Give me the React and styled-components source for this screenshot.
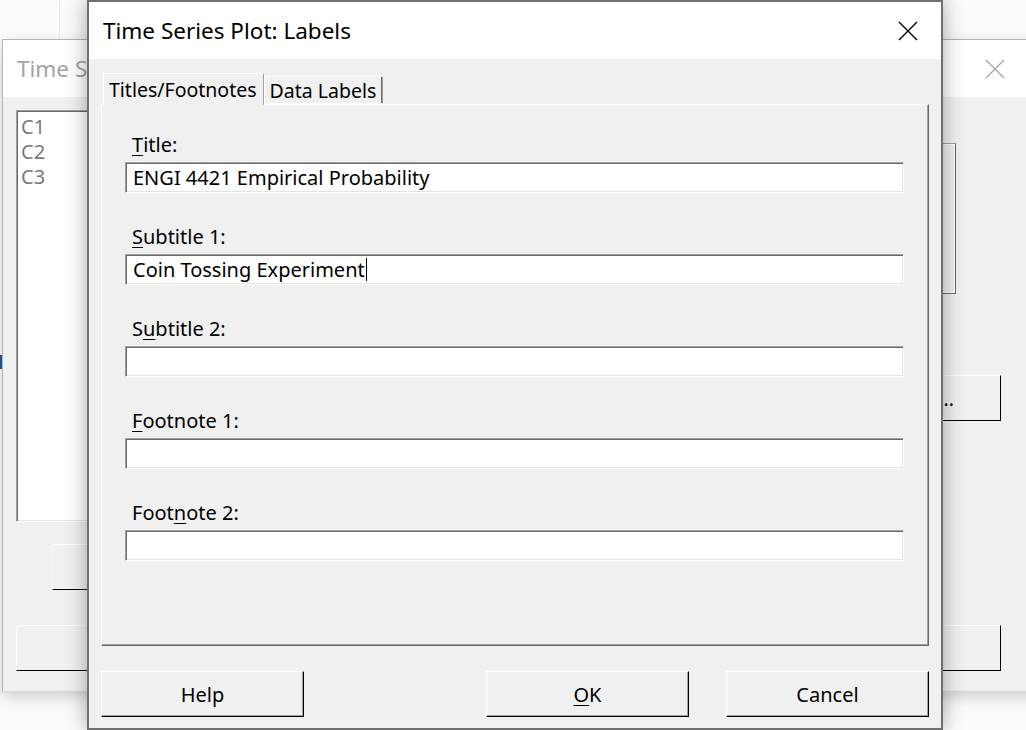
import React from 'react'
import styled, { createGlobalStyle } from 'styled-components'

const GlobalStyle = createGlobalStyle`
  html, body {
    margin: 0;
    padding: 0;
  }
  body {
    width: 1026px;
    height: 730px;
    overflow: hidden;
    background: #fbfbfb;
    font-family: "Noto Sans", "Segoe UI", sans-serif;
  }
`

const fields = [
  { before: '', key: 'T', after: 'itle:', value: 'ENGI 4421 Empirical Probability' },
  { before: '', key: 'S', after: 'ubtitle 1:', value: 'Coin Tossing Experiment', caret: true },
  { before: 'S', key: 'u', after: 'btitle 2:', value: '' },
  { before: '', key: 'F', after: 'ootnote 1:', value: '' },
  { before: 'Foot', key: 'n', after: 'ote 2:', value: '' }
]

const CloseIcon = ({ color }) =>
  <svg width="20" height="20" viewBox="0 0 20 20">
    <path d="M1 1 L19 19 M19 1 L1 19" stroke={color} strokeWidth="1.4" fill="none" />
  </svg>

const App = () =>
  <Desktop>
    <GlobalStyle />
    <EdgeMark />
    <BackWindow>
      <BackTitleBar>
        <span>Time Se</span>
        <CloseIcon color="#a8a8a8" />
      </BackTitleBar>
      <BackBody>
        <BackTopRow>
          <BackLeft>
            <ListBox>
              <ListItem>C1</ListItem>
              <ListItem>C2</ListItem>
              <ListItem>C3</ListItem>
            </ListBox>
            <BackButton indent />
          </BackLeft>
          <BackRight>
            <SunkenBox />
            <BackButton>Data View...</BackButton>
          </BackRight>
        </BackTopRow>
        <BackBottomRow>
          <BackButton />
          <BackButton />
        </BackBottomRow>
      </BackBody>
    </BackWindow>

    <Dialog>
      <TitleBar>
        <Title>Time Series Plot: Labels</Title>
        <CloseIcon color="#000" />
      </TitleBar>
      <Body>
        <TabStrip>
          <Tab selected>Titles/Footnotes</Tab>
          <Tab>Data Labels</Tab>
        </TabStrip>
        <Pane>
          {fields.map((f, i) =>
            <Field key={i}>
              <Label>{f.before}<Key>{f.key}</Key>{f.after}</Label>
              <TextBox>
                {f.value}
                {f.caret && <Caret />}
              </TextBox>
            </Field>
          )}
        </Pane>
        <ButtonRow>
          <Button>Help</Button>
          <Spacer />
          <Button><Key>O</Key>K</Button>
          <Button>Cancel</Button>
        </ButtonRow>
      </Body>
    </Dialog>
  </Desktop>

export default App

const Desktop = styled.div`
  position: relative;
  width: 1026px;
  height: 730px;
  overflow: hidden;
  background:
    linear-gradient(to right, transparent 59px, #ececec 59px, #ececec 60px, transparent 60px) top / 100% 39px no-repeat,
    #fbfbfb;
`

const EdgeMark = styled.div`
  position: absolute;
  left: 0;
  top: 355px;
  width: 3px;
  height: 14px;
  background: #1b5aa8;
`

const BackWindow = styled.div`
  position: absolute;
  left: 2px;
  top: 39px;
  width: 1046px;
  height: 653px;
  box-sizing: border-box;
  display: flex;
  flex-direction: column;
  background: #f0f0f0;
  border: 1px solid #b4b4b4;
  border-bottom-color: #d6d6d6;
  box-shadow: 0 5px 14px rgba(0, 0, 0, 0.18);
`

const BackTitleBar = styled.div`
  height: 57px;
  flex-shrink: 0;
  display: flex;
  align-items: center;
  justify-content: space-between;
  padding: 0 42px 0 14px;
  background: #fff;
  color: #a3a3a3;
  font-size: 22.5px;
  white-space: nowrap;
`

const BackBody = styled.div`
  display: flex;
  flex-direction: column;
  padding: 13px 46px 0 13px;
`

const BackTopRow = styled.div`
  display: flex;
  justify-content: space-between;
`

const BackLeft = styled.div`
  display: flex;
  flex-direction: column;
  align-items: flex-start;
`

const BackRight = styled.div`
  display: flex;
  flex-direction: column;
  align-items: flex-end;
`

const ListBox = styled.div`
  width: 320px;
  height: 412px;
  box-sizing: border-box;
  padding: 3px 4px;
  background: #fff;
  border: 1px solid;
  border-color: #a0a0a0 #fff #fff #a0a0a0;
  box-shadow: inset 1px 1px #696969, inset -1px -1px #e3e3e3;
`

const ListItem = styled.div`
  font-size: 20px;
  line-height: 25px;
  color: #7a7a7a;
`

const SunkenBox = styled.div`
  width: 180px;
  height: 151px;
  margin: 33px 45px 0 0;
  box-sizing: border-box;
  border: 1px solid;
  border-color: #a0a0a0 #696969 #696969 #a0a0a0;
  box-shadow: inset 1px 1px #fff, inset -1px -1px #fff;
`

const BackButton = styled.div`
  width: 200px;
  height: 46px;
  box-sizing: border-box;
  display: flex;
  align-items: center;
  justify-content: center;
  margin-top: ${p => p.indent ? '22px' : '0'};
  margin-left: ${p => p.indent ? '36px' : '0'};
  background: #f0f0f0;
  border: 1px solid;
  border-color: #fff #000 #000 #fff;
  font-size: 19.5px;
  color: #000;

  ${BackRight} & {
    margin-top: 81px;
  }
`

const BackBottomRow = styled.div`
  display: flex;
  justify-content: space-between;
  margin-top: 35px;
`

const Dialog = styled.div`
  position: absolute;
  left: 87px;
  top: 0;
  width: 856px;
  height: 730px;
  box-sizing: border-box;
  display: flex;
  flex-direction: column;
  background: #f0f0f0;
  border: 2px solid #707070;
  box-shadow: 0 0 20px rgba(0, 0, 0, 0.35);
`

const TitleBar = styled.div`
  height: 57px;
  flex-shrink: 0;
  display: flex;
  align-items: center;
  justify-content: space-between;
  padding: 0 23px 0 14px;
  background: #fff;
`

const Title = styled.span`
  font-size: 22.5px;
  color: #000;
`

const Body = styled.div`
  display: flex;
  flex-direction: column;
  padding: 14px 12px 0 12px;
`

const TabStrip = styled.div`
  display: flex;
  align-items: flex-end;
  height: 32px;
  padding-left: 2px;
  margin-bottom: -1px;
  position: relative;
  z-index: 1;
`

const Tab = styled.div`
  height: ${p => p.selected ? '32px' : '28px'};
  box-sizing: border-box;
  display: flex;
  align-items: center;
  padding: 0 6px 0 5px;
  background: #f0f0f0;
  border: 1px solid;
  border-color: #fff #a0a0a0 ${p => p.selected ? '#f0f0f0' : '#fff'} #fff;
  box-shadow: ${p => p.selected ? 'none' : 'inset -1px 0 #696969'};
  font-size: 19.5px;
  color: #000;
  margin-top: ${p => p.selected ? '0' : '2px'};
  margin-bottom: ${p => p.selected ? '0' : '1px'};
`

const Pane = styled.div`
  height: 542px;
  box-sizing: border-box;
  display: flex;
  flex-direction: column;
  gap: 32px;
  padding: 28px 24px 0 23px;
  border: 1px solid;
  border-color: #fff #696969 #696969 #fff;
  box-shadow: inset -1px -1px #a0a0a0;
`

const Field = styled.div`
  display: flex;
  flex-direction: column;
`

const Label = styled.div`
  line-height: 24px;
  padding-left: 7px;
  font-size: 20px;
  color: #000;
`

const Key = styled.span`
  text-decoration: underline;
  text-underline-offset: 3px;
  text-decoration-thickness: 1px;
`

const TextBox = styled.div`
  height: 31px;
  margin-top: 5px;
  box-sizing: border-box;
  display: flex;
  align-items: center;
  padding-left: 7px;
  background: #fff;
  border: 1px solid;
  border-color: #a0a0a0 #fff #fff #a0a0a0;
  box-shadow: inset 1px 1px #696969, inset -1px -1px #e3e3e3;
  font-size: 20px;
  color: #000;
  white-space: pre;
`

const Caret = styled.span`
  display: inline-block;
  width: 1px;
  height: 23px;
  margin-left: 1px;
  background: #000;
`

const ButtonRow = styled.div`
  display: flex;
  gap: 37px;
  margin-top: 25px;
`

const Spacer = styled.div`
  flex: 1;
`

const Button = styled.div`
  width: 203px;
  height: 46px;
  box-sizing: border-box;
  display: flex;
  align-items: center;
  justify-content: center;
  background: #f0f0f0;
  border: 1px solid;
  border-color: #fff #000 #000 #fff;
  box-shadow: inset -1px -1px #a0a0a0;
  font-size: 20px;
  color: #000;
`
